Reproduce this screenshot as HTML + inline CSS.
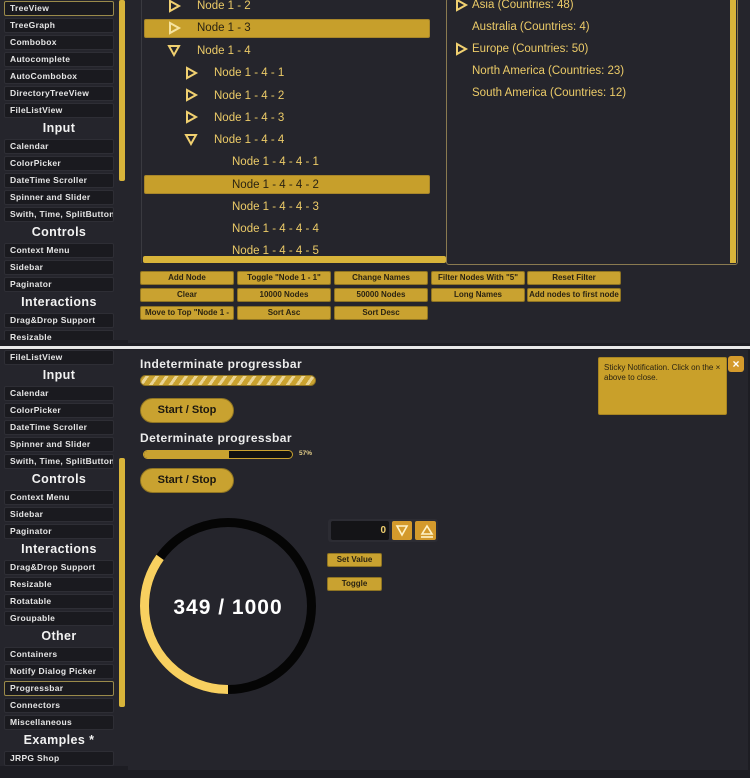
<!DOCTYPE html><html><head><style>
*{margin:0;padding:0;box-sizing:border-box}
body{width:750px;height:778px;background:#1d1d23;font-family:"Liberation Sans",sans-serif;position:relative;overflow:hidden}
.a{position:absolute}
.side{position:absolute;left:0;width:128px;background:#25252c;overflow:hidden}
.it{position:absolute;left:4px;width:110px;height:15px;background:#1a1a1f;border:1px solid #2e2e35;border-radius:2px;color:#e6e6e6;font-size:8.5px;font-weight:bold;line-height:13px;padding-left:5px;white-space:nowrap;overflow:hidden;letter-spacing:0.3px}
.sel{border-color:#9a8a4a}
.hd{position:absolute;left:4px;width:110px;height:17px;color:#f2f2f2;font-size:12.5px;font-weight:bold;text-align:center;line-height:17px;letter-spacing:0.4px}
.sb{position:absolute;left:119px;width:6px;background:#d8b43a;border-radius:2px}
.row{position:absolute;height:20px;color:#eccb68;font-size:11.5px;line-height:20px;white-space:nowrap}
.hl{position:absolute;left:144px;width:286px;height:19px;background:#c79f2b;border-radius:2px;border:1px solid #a8862a}
.btn{position:absolute;height:14px;width:94px;background:#c9a230;border:1px solid #8f7422;border-radius:2px;color:#2a2312;font-size:8px;font-weight:bold;text-align:center;line-height:12px;white-space:nowrap;overflow:hidden}
</style></head><body>
<div class="a" style="left:128px;top:0;width:622px;height:343px;background:#25252c"></div>
<div class="side" style="top:0;height:340px">
<div class="it sel" style="top:1px">TreeView</div>
<div class="it" style="top:18px">TreeGraph</div>
<div class="it" style="top:35px">Combobox</div>
<div class="it" style="top:52px">Autocomplete</div>
<div class="it" style="top:69px">AutoCombobox</div>
<div class="it" style="top:86px">DirectoryTreeView</div>
<div class="it" style="top:103px">FileListView</div>
<div class="hd" style="top:120px">Input</div>
<div class="it" style="top:139px">Calendar</div>
<div class="it" style="top:156px">ColorPicker</div>
<div class="it" style="top:173px">DateTime Scroller</div>
<div class="it" style="top:190px">Spinner and Slider</div>
<div class="it" style="top:207px">Swith, Time, SplitButton</div>
<div class="hd" style="top:224px">Controls</div>
<div class="it" style="top:243px">Context Menu</div>
<div class="it" style="top:260px">Sidebar</div>
<div class="it" style="top:277px">Paginator</div>
<div class="hd" style="top:294px">Interactions</div>
<div class="it" style="top:313px">Drag&amp;Drop Support</div>
<div class="it" style="top:330px">Resizable</div>
<div class="sb" style="top:0;height:181px"></div>
</div>
<div class="a" style="left:141px;top:0;width:1px;height:263px;background:#3a3a40"></div>
<div class="hl" style="top:19px"></div>
<div class="hl" style="top:175px"></div>
<svg class="a" style="left:160px;top:0" width="50" height="150">
<g fill="none" stroke="#f0d070" stroke-width="2">
<path d="M10 1 L19 6 L10 11Z"/><path d="M10 23 L19 28 L10 33Z" stroke="#f6e3a0"/>
<path d="M9 46 L19 46 L14 55Z"/>
<path d="M27 68 L36 73 L27 78Z"/><path d="M27 90 L36 95 L27 100Z"/><path d="M27 112 L36 117 L27 122Z"/>
<path d="M26 135 L36 135 L31 144Z"/></g></svg>
<div class="row" style="left:197px;top:-4px">Node 1 - 2</div>
<div class="row" style="left:197px;top:18px;color:#2a2312">Node 1 - 3</div>
<div class="row" style="left:197px;top:41px">Node 1 - 4</div>
<div class="row" style="left:214px;top:63px">Node 1 - 4 - 1</div>
<div class="row" style="left:214px;top:86px">Node 1 - 4 - 2</div>
<div class="row" style="left:214px;top:108px">Node 1 - 4 - 3</div>
<div class="row" style="left:214px;top:130px">Node 1 - 4 - 4</div>
<div class="row" style="left:232px;top:152px">Node 1 - 4 - 4 - 1</div>
<div class="row" style="left:232px;top:175px;color:#2a2312">Node 1 - 4 - 4 - 2</div>
<div class="row" style="left:232px;top:197px">Node 1 - 4 - 4 - 3</div>
<div class="row" style="left:232px;top:219px">Node 1 - 4 - 4 - 4</div>
<div class="a" style="left:142px;top:244px;width:300px;height:12px;overflow:hidden"><div class="row" style="left:90px;top:-3px">Node 1 - 4 - 4 - 5</div></div>
<div class="a" style="left:143px;top:256px;width:303px;height:7px;background:#d8b43a;border-radius:2px"></div>
<div class="a" style="left:446px;top:-2px;width:292px;height:267px;border:1px solid #8a7a50;border-radius:3px;background:#25252c"></div>
<div class="a" style="left:730px;top:0;width:6px;height:263px;background:#d8b43a"></div>
<svg class="a" style="left:450px;top:0" width="20" height="60"><g fill="none" stroke="#f0d070" stroke-width="2"><path d="M7 0 L16 5 L7 10Z"/><path d="M7 44 L16 49 L7 54Z"/></g></svg>
<div class="row" style="left:472px;top:-5px">Asia (Countries: 48)</div>
<div class="row" style="left:472px;top:17px">Australia (Countries: 4)</div>
<div class="row" style="left:472px;top:39px">Europe (Countries: 50)</div>
<div class="row" style="left:472px;top:61px">North America (Countries: 23)</div>
<div class="row" style="left:472px;top:83px">South America (Countries: 12)</div>
<div class="btn" style="left:140px;top:271px">Add Node</div>
<div class="btn" style="left:237px;top:271px">Toggle "Node 1 - 1"</div>
<div class="btn" style="left:334px;top:271px">Change Names</div>
<div class="btn" style="left:431px;top:271px">Filter Nodes With "5"</div>
<div class="btn" style="left:527px;top:271px">Reset Filter</div>
<div class="btn" style="left:140px;top:288px">Clear</div>
<div class="btn" style="left:237px;top:288px">10000 Nodes</div>
<div class="btn" style="left:334px;top:288px">50000 Nodes</div>
<div class="btn" style="left:431px;top:288px">Long Names</div>
<div class="btn" style="left:527px;top:288px">Add nodes to first node</div>
<div class="btn" style="left:140px;top:306px">Move to Top "Node 1 -</div>
<div class="btn" style="left:237px;top:306px">Sort Asc</div>
<div class="btn" style="left:334px;top:306px">Sort Desc</div>
<div class="a" style="left:0;top:346px;width:750px;height:3px;background:#e8e8e8"></div>
<div class="a" style="left:128px;top:350px;width:620px;height:420px;background:#25252c"></div>
<div class="side" style="top:350px;height:416px">
<div class="it" style="top:0px">FileListView</div>
<div class="hd" style="top:17px">Input</div>
<div class="it" style="top:36px">Calendar</div>
<div class="it" style="top:53px">ColorPicker</div>
<div class="it" style="top:70px">DateTime Scroller</div>
<div class="it" style="top:87px">Spinner and Slider</div>
<div class="it" style="top:104px">Swith, Time, SplitButton</div>
<div class="hd" style="top:121px">Controls</div>
<div class="it" style="top:140px">Context Menu</div>
<div class="it" style="top:157px">Sidebar</div>
<div class="it" style="top:174px">Paginator</div>
<div class="hd" style="top:191px">Interactions</div>
<div class="it" style="top:210px">Drag&amp;Drop Support</div>
<div class="it" style="top:227px">Resizable</div>
<div class="it" style="top:244px">Rotatable</div>
<div class="it" style="top:261px">Groupable</div>
<div class="hd" style="top:278px">Other</div>
<div class="it" style="top:297px">Containers</div>
<div class="it" style="top:314px">Notify Dialog Picker</div>
<div class="it sel" style="top:331px">Progressbar</div>
<div class="it" style="top:348px">Connectors</div>
<div class="it" style="top:365px">Miscellaneous</div>
<div class="hd" style="top:382px">Examples *</div>
<div class="it" style="top:401px">JRPG Shop</div>
<div class="sb" style="top:108px;height:249px"></div>
</div>
<div class="a" style="left:140px;top:357px;color:#ececec;font-size:12px;font-weight:bold;letter-spacing:0.4px">Indeterminate progressbar</div>
<div class="a" style="left:140px;top:375px;width:176px;height:11px;border-radius:6px;background:repeating-linear-gradient(-55deg,#c9a230 0 5px,#ead596 5px 8px);border:1px solid #8f7422"></div>
<div class="a" style="left:140px;top:398px;width:94px;height:25px;border-radius:13px;background:#c9a230;border:1px solid #8f7422;color:#1c1810;font-size:11px;font-weight:bold;text-align:center;line-height:23px">Start / Stop</div>
<div class="a" style="left:140px;top:431px;color:#ececec;font-size:12px;font-weight:bold;letter-spacing:0.4px">Determinate progressbar</div>
<div class="a" style="left:143px;top:450px;width:150px;height:9px;border-radius:5px;background:#111;border:1px solid #c9a230;overflow:hidden"><div style="width:85px;height:100%;background:#c9a230"></div></div>
<div class="a" style="left:299px;top:450px;color:#e6d08a;font-size:6.5px;font-weight:bold">57%</div>
<div class="a" style="left:140px;top:468px;width:94px;height:25px;border-radius:13px;background:#c9a230;border:1px solid #8f7422;color:#1c1810;font-size:11px;font-weight:bold;text-align:center;line-height:23px">Start / Stop</div>
<svg class="a" style="left:138px;top:516px" width="180" height="180">
<circle cx="90" cy="90" r="83.5" fill="none" stroke="#050505" stroke-width="9"/>
<circle cx="90" cy="90" r="83.5" fill="none" stroke="#f8d060" stroke-width="9" stroke-dasharray="183 400" transform="rotate(90 90 90)"/>
<text x="90" y="98" text-anchor="middle" fill="#fff" font-family="Liberation Sans" font-size="21" font-weight="bold" letter-spacing="1">349 / 1000</text>
</svg>
<div class="a" style="left:328px;top:519px;width:110px;height:23px;background:#2c2c33;border-radius:3px"></div>
<div class="a" style="left:331px;top:521px;width:58px;height:19px;background:#141417;border-radius:2px;color:#f0d070;font-size:10px;font-weight:bold;text-align:right;padding-right:3px;line-height:19px">0</div>
<div class="a" style="left:392px;top:521px;width:20px;height:19px;background:#d49a2c;border-radius:2px"></div>
<div class="a" style="left:415px;top:521px;width:21px;height:19px;background:#d49a2c;border-radius:2px"></div>
<svg class="a" style="left:392px;top:521px" width="46" height="19"><g fill="none" stroke="#fff3c8" stroke-width="1.6"><path d="M5 5 L15 5 L10 14Z"/><path d="M30 13 L40 13 L35 5Z"/><path d="M29 16 L41 16"/></g></svg>
<div class="btn" style="left:327px;top:553px;width:55px">Set Value</div>
<div class="btn" style="left:327px;top:577px;width:55px">Toggle</div>
<div class="a" style="left:598px;top:357px;width:129px;height:58px;background:#c9a02a;border-radius:2px;border:1px solid #a88522;color:#2a2312;font-size:8px;line-height:10px;padding:5px 5px">Sticky Notification. Click on the × above to close.</div>
<div class="a" style="left:728px;top:356px;width:16px;height:16px;background:#d49a2c;border-radius:3px;color:#fff;font-size:12px;font-weight:bold;text-align:center;line-height:16px">×</div>
</body></html>
